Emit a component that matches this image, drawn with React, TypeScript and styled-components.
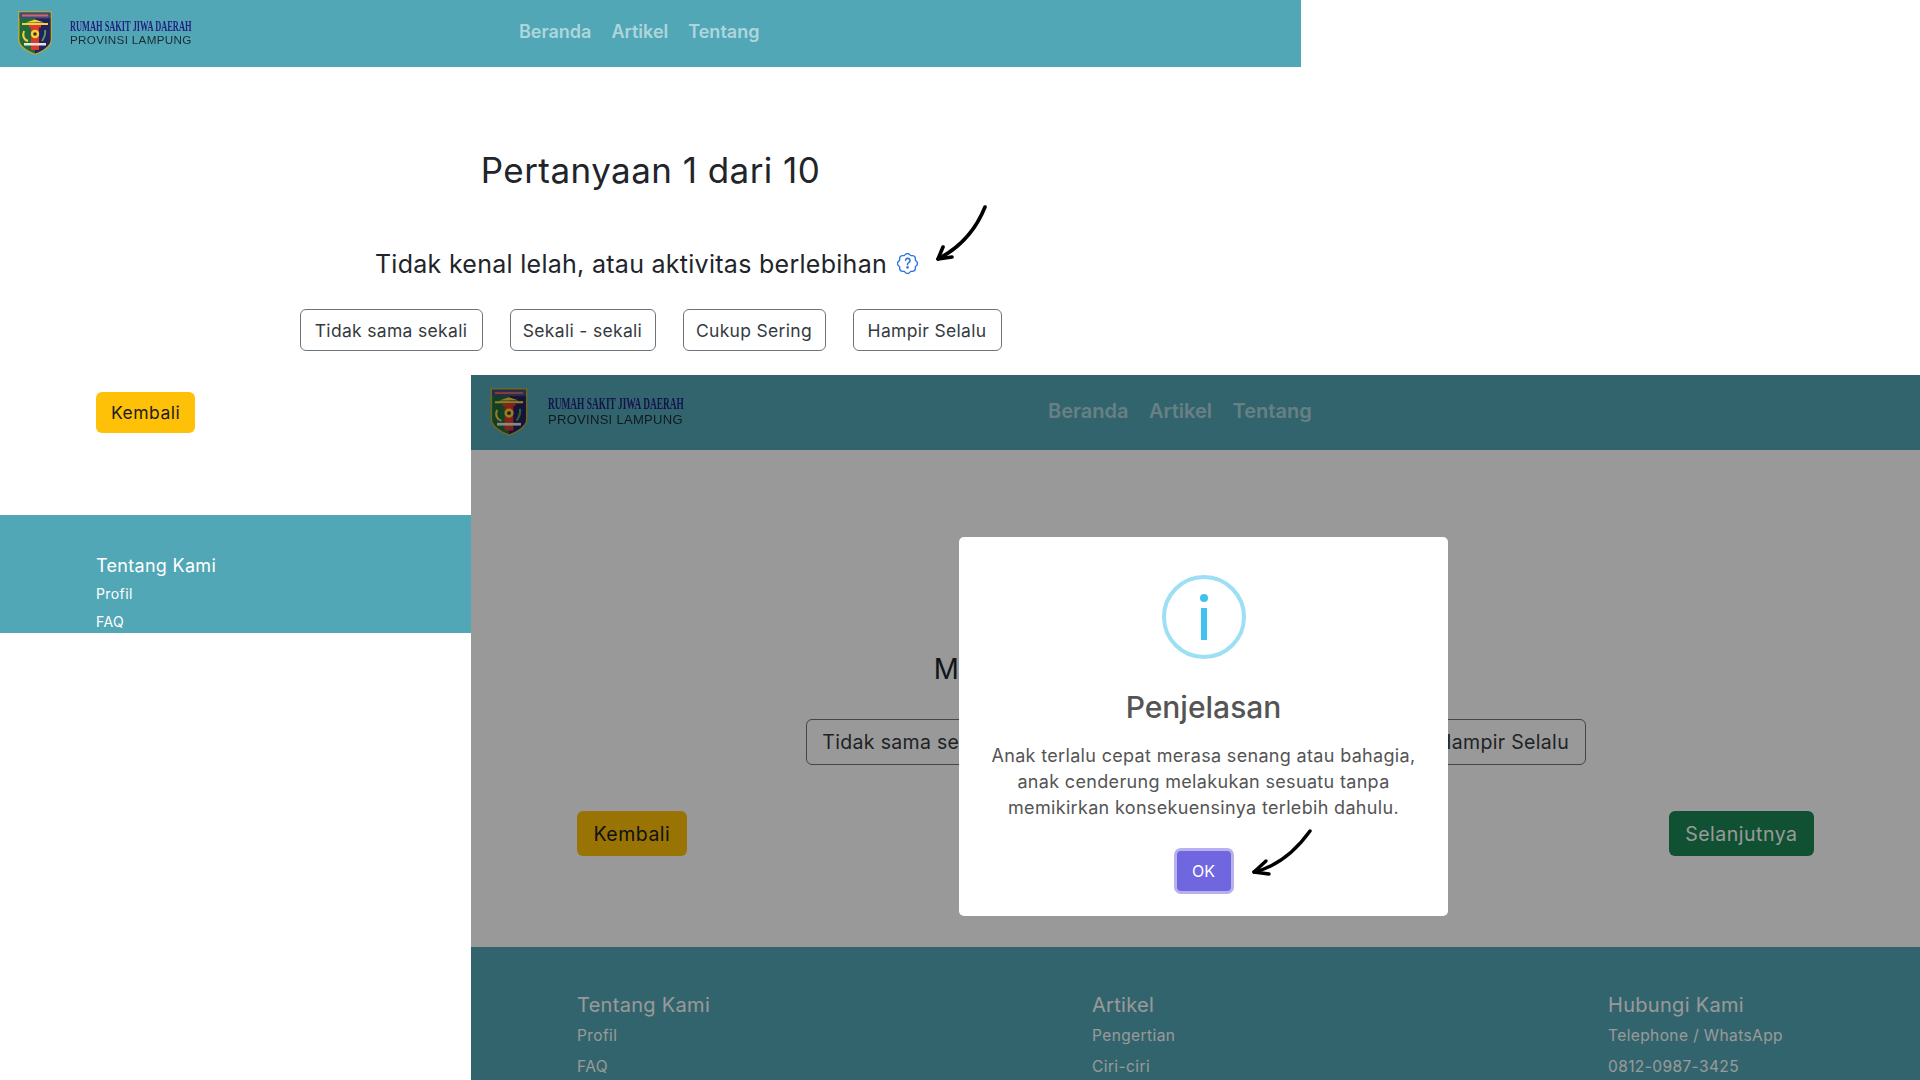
import React from "react";
import styled, { createGlobalStyle } from "styled-components";
import { BsPatchQuestion } from "react-icons/bs";

const Global = createGlobalStyle`
  html, body { margin: 0; padding: 0; background: #fff; overflow: hidden; }
  * { box-sizing: border-box; }
`;

const FONT = `Inter, "Noto Sans", "Liberation Sans", sans-serif`;

const Stage = styled.div`
  position: relative;
  width: 1920px;
  height: 1080px;
  overflow: hidden;
  background: #fff;
  font-family: ${FONT};
`;

const BackWindow = styled.section`
  position: absolute;
  left: 0;
  top: 0;
  width: 1301px;
  display: flex;
  flex-direction: column;
  background: #fff;
`;

const FrontWindow = styled.section`
  position: absolute;
  left: 471px;
  top: 375px;
  width: 1449px;
  height: 705px;
  overflow: hidden;
  display: flex;
  flex-direction: column;
  background: #fff;
`;

const Nav = styled.header<{ $front?: boolean }>`
  display: flex;
  align-items: center;
  flex: none;
  height: ${p => (p.$front ? 75 : 67)}px;
  padding-left: ${p => (p.$front ? 18 : 17)}px;
  background: #52a7b6;
`;

const Logo = styled.div<{ $front?: boolean }>`
  display: flex;
  align-items: center;
  flex: none;
  gap: ${p => (p.$front ? 19 : 17)}px;
  width: ${p => (p.$front ? 194 : 175)}px;
  margin-bottom: 2px;
  filter: blur(0.35px);
`;

const LogoWords = styled.div<{ $front?: boolean }>`
  display: flex;
  flex-direction: column;
  gap: ${p => (p.$front ? 1 : 0)}px;
  margin-bottom: 1px;
  white-space: nowrap;
`;

const LogoName = styled.span<{ $front?: boolean }>`
  display: block;
  font: bold ${p => (p.$front ? 17 : 15.5)}px/${p => (p.$front ? 16 : 15)}px "Liberation Serif", serif;
  color: #23207f;
  transform-origin: left center;
  transform: scaleX(${p => (p.$front ? 0.55 : 0.54)});
  width: 100px;
`;

const LogoRegion = styled.span<{ $front?: boolean }>`
  display: block;
  font: ${p => (p.$front ? 13 : 11.7)}px/${p => (p.$front ? 14 : 13)}px "Liberation Sans", sans-serif;
  letter-spacing: 0.3px;
  color: #1d2a33;
`;

const NavLinks = styled.nav<{ $front?: boolean }>`
  display: flex;
  gap: ${p => (p.$front ? 20.5 : 20)}px;
  margin-left: ${p => (p.$front ? 365 : 327)}px;
  margin-bottom: 4px;
`;

const NavLink = styled.a<{ $front?: boolean }>`
  font-size: ${p => (p.$front ? 20 : 18)}px;
  font-weight: 600;
  color: rgba(255, 255, 255, 0.55);
`;

const Main = styled.main<{ $front?: boolean }>`
  display: flex;
  flex-direction: column;
  align-items: center;
  flex: none;
  height: ${p => (p.$front ? 497 : 448)}px;
  padding: ${p => (p.$front ? "89px 106px 0" : "77px 96px 0")};
`;

const Title = styled.h1<{ $front?: boolean }>`
  margin: 0;
  font-size: ${p => (p.$front ? 39 : 35)}px;
  line-height: ${p => (p.$front ? 58 : 52)}px;
  font-weight: 400;
  letter-spacing: 0.45px;
  color: #212529;
`;

const Question = styled.p<{ $front?: boolean }>`
  display: flex;
  align-items: center;
  gap: 10px;
  margin: ${p => (p.$front ? "52px 10px 0 0" : "50px 8px 0 0")};
  font-size: ${p => (p.$front ? 27.8 : 25)}px;
  line-height: ${p => (p.$front ? 40 : 36)}px;
  letter-spacing: 0.28px;
  font-weight: 400;
  color: #212529;
  white-space: nowrap;
`;

const HelpIcon = styled(BsPatchQuestion)`
  flex: none;
  width: 21px;
  height: 21px;
  margin-top: -2px;
  color: #2f74e0;
`;

const Options = styled.div<{ $front?: boolean }>`
  display: flex;
  justify-content: center;
  gap: ${p => (p.$front ? 30 : 27)}px;
  margin-top: ${p => (p.$front ? 30 : 27)}px;
`;

const OptionButton = styled.button<{ $front?: boolean; $width: number }>`
  width: ${p => p.$width}px;
  height: ${p => (p.$front ? 46 : 42)}px;
  padding: 0;
  border: 1px solid #6c757d;
  border-radius: 6px;
  background: transparent;
  font-family: ${FONT};
  font-size: ${p => (p.$front ? 19.5 : 17.5)}px;
  letter-spacing: 0.32px;
  color: #343a40;
  white-space: nowrap;
`;

const Actions = styled.div<{ $front?: boolean }>`
  display: flex;
  justify-content: space-between;
  align-self: stretch;
  margin-top: ${p => (p.$front ? 46 : 41)}px;
`;

const ActionButton = styled.button<{ $tone: "back" | "next"; $front?: boolean }>`
  height: ${p => (p.$front ? 45 : 41)}px;
  padding: 0 ${p => (p.$front ? 16.5 : 15)}px;
  border: none;
  border-radius: 6px;
  background: ${p => (p.$tone === "back" ? "#ffc107" : "#198754")};
  color: ${p => (p.$tone === "back" ? "#1c1c1c" : "#fff")};
  font-family: ${FONT};
  font-size: ${p => (p.$front ? 19.5 : 17.5)}px;
  letter-spacing: 0.5px;
`;

const Footer = styled.footer<{ $front?: boolean }>`
  flex: none;
  display: grid;
  grid-template-columns: ${p => (p.$front ? "515px 516px 1fr" : "1fr")};
  height: ${p => (p.$front ? 133 : 118)}px;
  padding: ${p => (p.$front ? "43px 106px 0" : "38px 96px 0")};
  background: #52a7b6;
  color: #fff;
`;

const FooterCol = styled.div`
  display: flex;
  flex-direction: column;
`;

const FooterHead = styled.div<{ $front?: boolean }>`
  font-size: ${p => (p.$front ? 20 : 18)}px;
  line-height: ${p => (p.$front ? 30 : 26)}px;
  letter-spacing: 0.3px;
  margin-bottom: ${p => (p.$front ? 0 : 1)}px;
`;

const FooterItem = styled.div<{ $front?: boolean }>`
  font-size: ${p => (p.$front ? 15.5 : 14)}px;
  line-height: ${p => (p.$front ? 31 : 28)}px;
  letter-spacing: 0.4px;
`;

const Overlay = styled.div`
  position: absolute;
  inset: 0;
  display: flex;
  align-items: center;
  justify-content: center;
  padding: 0 0 2px 16px;
  background: rgba(0, 0, 0, 0.4);
`;

const Modal = styled.div`
  position: relative;
  display: flex;
  flex-direction: column;
  align-items: center;
  width: 489px;
  height: 379px;
  padding-top: 38px;
  border-radius: 5px;
  background: #fff;
  color: #545454;
`;

const InfoRing = styled.div`
  display: flex;
  align-items: center;
  justify-content: center;
  width: 84px;
  height: 84px;
  border: 4px solid #9de0f6;
  border-radius: 50%;
`;

const InfoGlyph = styled.svg`
  width: 8px;
  height: 46px;
  fill: #3fc3ee;
`;

const ModalTitle = styled.h2`
  margin: 27px 0 0;
  font-size: 30px;
  line-height: 42px;
  font-weight: 500;
  color: #545454;
`;

const ModalText = styled.p`
  margin: 15px 0 0;
  font-size: 18px;
  line-height: 26px;
  letter-spacing: 0.33px;
  text-align: center;
  color: #545454;
`;

const OkButton = styled.button`
  width: 54px;
  height: 40px;
  margin-top: 30px;
  border: none;
  border-radius: 4px;
  background: #7066e0;
  box-shadow: 0 0 0 3px rgba(112, 102, 224, 0.5);
  color: #fff;
  font-family: ${FONT};
  font-size: 16px;
`;

const Arrow = styled.svg<{ $left: number; $top: number; $w: number; $h: number }>`
  position: absolute;
  left: ${p => p.$left}px;
  top: ${p => p.$top}px;
  width: ${p => p.$w}px;
  height: ${p => p.$h}px;
  fill: none;
  stroke: #000;
  stroke-linecap: round;
  stroke-linejoin: round;
`;

const Crest: React.FC<{ w: number; h: number }> = ({ w, h }) => (
  <svg width={w} height={h} viewBox="0 0 36 46" style={{ flex: "none" }}>
    <path d="M1 1H35V30C35 37 26 42 18 45C10 42 1 37 1 30Z" fill="#b9a83a" />
    <path d="M2.5 2.5H33.500V30C33.500 36 25 41 18 43.500C11 41 2.500 36 2.500 30Z" fill="#1f6b3c" />
    <path d="M18 8H33.500V30C33.500 36 25 41 18 43.500Z" fill="#23215f" />
    <rect x="2.500" y="2.500" width="31" height="6" fill="#3c4d7c" />
    <rect x="5" y="4.500" width="26" height="2" fill="#d8646a" />
    <rect x="5" y="13" width="26" height="2" fill="#f2d13a" />
    <path d="M9 12.500L18 9.500L27 12.500Z" fill="#f2d13a" />
    <rect x="12" y="15" width="12" height="2.500" fill="#e23b2e" />
    <rect x="14" y="17" width="8" height="23" fill="#d93a2b" />
    <circle cx="18" cy="24" r="4.200" fill="#f3d53a" />
    <circle cx="18" cy="24" r="1.800" fill="#4a2b12" />
    <path d="M7 21C5 26 7 30 11 31" stroke="#f2d13a" strokeWidth="2" fill="none" />
    <path d="M28 20C29 24 27 28 25 31" stroke="#4f9b5b" strokeWidth="2" fill="none" />
    <rect x="7" y="33" width="22" height="2.500" fill="#e9e6d6" />
  </svg>
);

const Brand: React.FC<{ front?: boolean }> = ({ front }) => (
  <Logo $front={front}>
    <Crest w={front ? 40 : 36} h={front ? 50 : 46} />
    <LogoWords $front={front}>
      <LogoName $front={front}>RUMAH SAKIT JIWA DAERAH</LogoName>
      <LogoRegion $front={front}>PROVINSI LAMPUNG</LogoRegion>
    </LogoWords>
  </Logo>
);

const NavBar: React.FC<{ front?: boolean }> = ({ front }) => (
  <Nav $front={front}>
    <Brand front={front} />
    <NavLinks $front={front}>
      <NavLink $front={front}>Beranda</NavLink>
      <NavLink $front={front}>Artikel</NavLink>
      <NavLink $front={front}>Tentang</NavLink>
    </NavLinks>
  </Nav>
);

const options = [
  { label: "Tidak sama sekali", back: 183, front: 203 },
  { label: "Sekali - sekali", back: 146, front: 163 },
  { label: "Cukup Sering", back: 143, front: 159 },
  { label: "Hampir Selalu", back: 149, front: 165 },
];

const footerCols = [
  { head: "Tentang Kami", items: ["Profil", "FAQ"] },
  { head: "Artikel", items: ["Pengertian", "Ciri-ciri"] },
  { head: "Hubungi Kami", items: ["Telephone / WhatsApp", "0812-0987-3425"] },
];

const QuizBody: React.FC<{ front?: boolean; number: number; question: string; help?: boolean }> = ({ front, number, question, help }) => (
  <Main $front={front}>
    <Title $front={front}>Pertanyaan {number} dari 10</Title>
    <Question $front={front}>
      {question}
      {help && <HelpIcon />}
    </Question>
    <Options $front={front}>
      {options.map(o => (
        <OptionButton key={o.label} $front={front} $width={front ? o.front : o.back}>{o.label}</OptionButton>
      ))}
    </Options>
    <Actions $front={front}>
      <ActionButton $tone="back" $front={front}>Kembali</ActionButton>
      {front && <ActionButton $tone="next" $front={front}>Selanjutnya</ActionButton>}
    </Actions>
  </Main>
);

const SiteFooter: React.FC<{ front?: boolean }> = ({ front }) => (
  <Footer $front={front}>
    {(front ? footerCols : footerCols.slice(0, 1)).map(c => (
      <FooterCol key={c.head}>
        <FooterHead $front={front}>{c.head}</FooterHead>
        {c.items.map(i => (
          <FooterItem key={i} $front={front}>{i}</FooterItem>
        ))}
      </FooterCol>
    ))}
  </Footer>
);

export default function App() {
  return (
    <Stage>
      <Global />
      <BackWindow>
        <NavBar />
        <QuizBody number={1} question="Tidak kenal lelah, atau aktivitas berlebihan" help />
        <SiteFooter />
      </BackWindow>
      <Arrow $left={930} $top={200} $w={62} $h={66} viewBox="0 0 62 66" strokeWidth={3.6}>
        <path d="M55 7C47 27 33 46 8 59" />
        <path d="M8 59L13 47M8 59L22 57" />
      </Arrow>
      <FrontWindow>
        <NavBar front />
        <QuizBody front number={2} question="Merasa terlalu senang atau berlebihan" />
        <SiteFooter front />
        <Overlay>
          <Modal>
            <InfoRing>
              <InfoGlyph viewBox="0 0 8 46">
                <circle cx="4" cy="4" r="4" />
                <rect x="1" y="14" width="6" height="32" />
              </InfoGlyph>
            </InfoRing>
            <ModalTitle>Penjelasan</ModalTitle>
            <ModalText>
              Anak terlalu cepat merasa senang atau bahagia,
              <br />
              anak cenderung melakukan sesuatu tanpa
              <br />
              memikirkan konsekuensinya terlebih dahulu.
            </ModalText>
            <OkButton>OK</OkButton>
          </Modal>
        </Overlay>
      </FrontWindow>
      <Arrow $left={1245} $top={824} $w={72} $h={56} viewBox="0 0 72 56" strokeWidth={3.4}>
        <path d="M65 7C52 25 34 42 9 48" />
        <path d="M9 48L21 37M9 48L24 50" />
      </Arrow>
    </Stage>
  );
}
